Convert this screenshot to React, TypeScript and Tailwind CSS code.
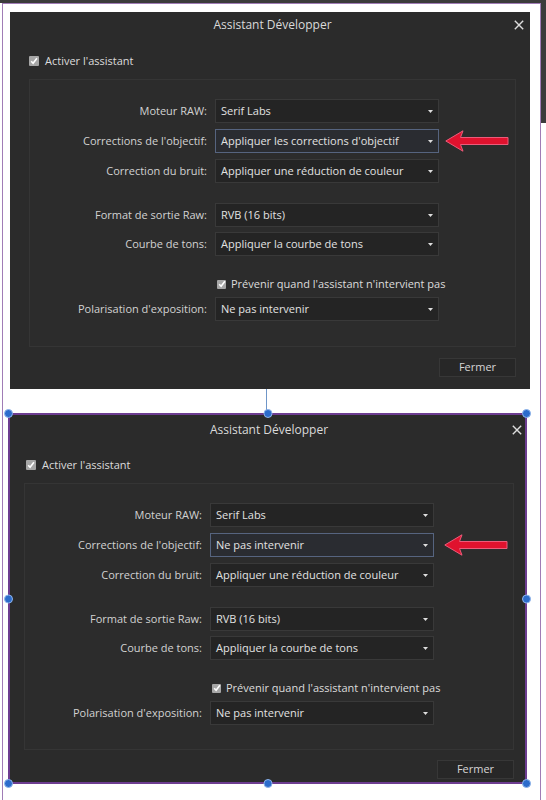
import React from "react";

type Row =
  | { kind: "select"; label: string; value: string; active?: boolean; gap: string }
  | { kind: "check"; label: string; gap: string };

const rowsTop: Row[] = [
  { kind: "select", label: "Moteur RAW:", value: "Serif Labs", gap: "mt-0" },
  { kind: "select", label: "Corrections de l'objectif:", value: "Appliquer les corrections d'objectif", active: true, gap: "mt-[6px]" },
  { kind: "select", label: "Correction du bruit:", value: "Appliquer une réduction de couleur", gap: "mt-[6px]" },
  { kind: "select", label: "Format de sortie Raw:", value: "RVB (16 bits)", gap: "mt-[20px]" },
  { kind: "select", label: "Courbe de tons:", value: "Appliquer la courbe de tons", gap: "mt-[5px]" },
  { kind: "check", label: "Prévenir quand l'assistant n'intervient pas", gap: "mt-[21px]" },
  { kind: "select", label: "Polarisation d'exposition:", value: "Ne pas intervenir", gap: "mt-[6px]" },
];

const rowsBottom: Row[] = rowsTop.map((r, i) =>
  i === 1 && r.kind === "select" ? { ...r, value: "Ne pas intervenir" } : r
);

function CheckBox({ size }: { size: "lg" | "sm" }) {
  return (
    <span
      className={`${size === "lg" ? "w-[10px] h-[10px]" : "w-[9px] h-[9px]"} shrink-0 rounded-[1px] bg-[#a6a6a6] flex items-center justify-center`}
    >
      <svg width="8" height="8" viewBox="0 0 8 8">
        <path d="M1.2 4.3 L3.1 6.3 L6.9 1.3" stroke="#ffffff" strokeWidth="1.6" fill="none" />
      </svg>
    </span>
  );
}

function RedArrow({ far }: { far: boolean }) {
  return (
    <svg
      className={`absolute ${far ? "left-[calc(100%+11px)]" : "left-[calc(100%+7px)]"} top-1/2 -translate-y-1/2`}
      width="64"
      height="22"
      viewBox="0 0 64 22"
    >
      <path
        d="M0.8 11 L18 0.8 L15.5 7.5 L63 7.5 L63 14.5 L15.5 14.5 L18 21.2 Z"
        fill="#e0122e"
        stroke="#ec5b7a"
        strokeWidth="1"
        strokeLinejoin="round"
      />
    </svg>
  );
}

function Select({ value, active, far }: { value: string; active?: boolean; far: boolean }) {
  return (
    <div
      className={`relative w-[224px] h-[24px] flex items-center pl-[5px] pr-[4px] border ${
        active ? "border-[#56647f] bg-[#2a2c31]" : "border-[#393939] bg-[#242424]"
      }`}
    >
      <span className="flex-1 text-[11px] text-[#e2e2e2] whitespace-nowrap">{value}</span>
      <svg width="5" height="3" viewBox="0 0 5 3" className="mr-[1px]">
        <path d="M0 0 H5 L2.5 3 Z" fill="#dedede" />
      </svg>
      {active && <RedArrow far={far} />}
    </div>
  );
}

function Dialog({ rows, variant }: { rows: Row[]; variant: "top" | "bottom" }) {
  const top = variant === "top";
  return (
    <div
      className={`${top ? "w-[520px] h-[377px] pl-[19px] pr-[14px]" : "w-full h-full pl-[14px] pr-[11px]"} bg-[#2b2b2b] flex flex-col text-[#d2d2d2]`}
    >
      <div className={`relative ${top ? "h-[26px]" : "h-[30px]"} flex items-center justify-center`}>
        <span className="text-[12px] text-[#dadada]">Assistant Développer</span>
        <svg
          className="absolute right-[-8px] top-1/2 -translate-y-1/2"
          width="10"
          height="10"
          viewBox="0 0 10 10"
        >
          <path d="M0.8 0.8 L9.2 9.2 M9.2 0.8 L0.8 9.2" stroke="#dcdcdc" strokeWidth="1.4" />
        </svg>
      </div>
      <div className={`flex items-center gap-[6px] h-[14px] ${top ? "mt-[16px]" : "mt-[13px] ml-[2px]"}`}>
        <CheckBox size="lg" />
        <span className="text-[11px] text-[#dcdcdc]">Activer l'assistant</span>
      </div>
      <div
        className={`mt-[11px] ${top ? "h-[268px]" : "h-[267px]"} border border-[#353535] bg-[#2c2c2c] pt-[19px] flex flex-col`}
      >
        {rows.map((r) =>
          r.kind === "select" ? (
            <div key={r.label} className={`flex items-center ${r.gap}`}>
              <span className="w-[185px] pr-[8px] text-right text-[11px] text-[#d2d2d2] whitespace-nowrap">
                {r.label}
              </span>
              <Select value={r.value} active={r.active} far={!top} />
            </div>
          ) : (
            <div key={r.label} className={`flex items-center gap-[5px] h-[14px] ml-[187px] ${r.gap}`}>
              <CheckBox size="sm" />
              <span className="text-[11px] text-[#dcdcdc] whitespace-nowrap">{r.label}</span>
            </div>
          )
        )}
      </div>
      <div className={`${top ? "mt-[11px]" : "mt-[10px]"} flex justify-end`}>
        <button className="w-[77px] h-[19px] border border-[#373737] bg-[#272727] text-[11px] text-[#d6d6d6] flex items-center justify-center">
          Fermer
        </button>
      </div>
    </div>
  );
}

function Handle({ pos }: { pos: string }) {
  return (
    <span
      className={`absolute ${pos} w-[9px] h-[9px] rounded-full bg-[#2c6ccc] border border-[#8fb4ea]`}
    />
  );
}

export default function App() {
  return (
    <div className="w-[546px] h-[800px] bg-white flex flex-col overflow-hidden font-['Open_Sans',sans-serif]">
      <div className="h-[3px] bg-[#3b3b3b] shrink-0" />
      <div className="flex-1 flex">
        <div className="w-[2px]" />
        <div className="w-[539px] border-l border-t border-r border-[#a07cb6] flex flex-col">
          <div className="ml-[7px] mt-[8px]">
            <Dialog rows={rowsTop} variant="top" />
          </div>
          <div className="ml-[263px] w-[1px] h-[24px] bg-[#6f96c8]" />
          <div className="ml-[5px] w-[519px] h-[371px] border-2 border-[#6d3d91] relative">
            <Dialog rows={rowsBottom} variant="bottom" />
            <Handle pos="left-[-6px] top-[-6px]" />
            <Handle pos="left-1/2 -translate-x-1/2 top-[-6px]" />
            <Handle pos="right-[-6px] top-[-6px]" />
            <Handle pos="left-[-6px] top-1/2 -translate-y-1/2" />
            <Handle pos="right-[-6px] top-1/2 -translate-y-1/2" />
            <Handle pos="left-[-6px] bottom-[-6px]" />
            <Handle pos="left-1/2 -translate-x-1/2 bottom-[-6px]" />
            <Handle pos="right-[-6px] bottom-[-6px]" />
          </div>
        </div>
        <div className="flex-1 flex flex-col">
          <div className="h-[120px] bg-[#3b3b3b]" />
        </div>
      </div>
    </div>
  );
}
